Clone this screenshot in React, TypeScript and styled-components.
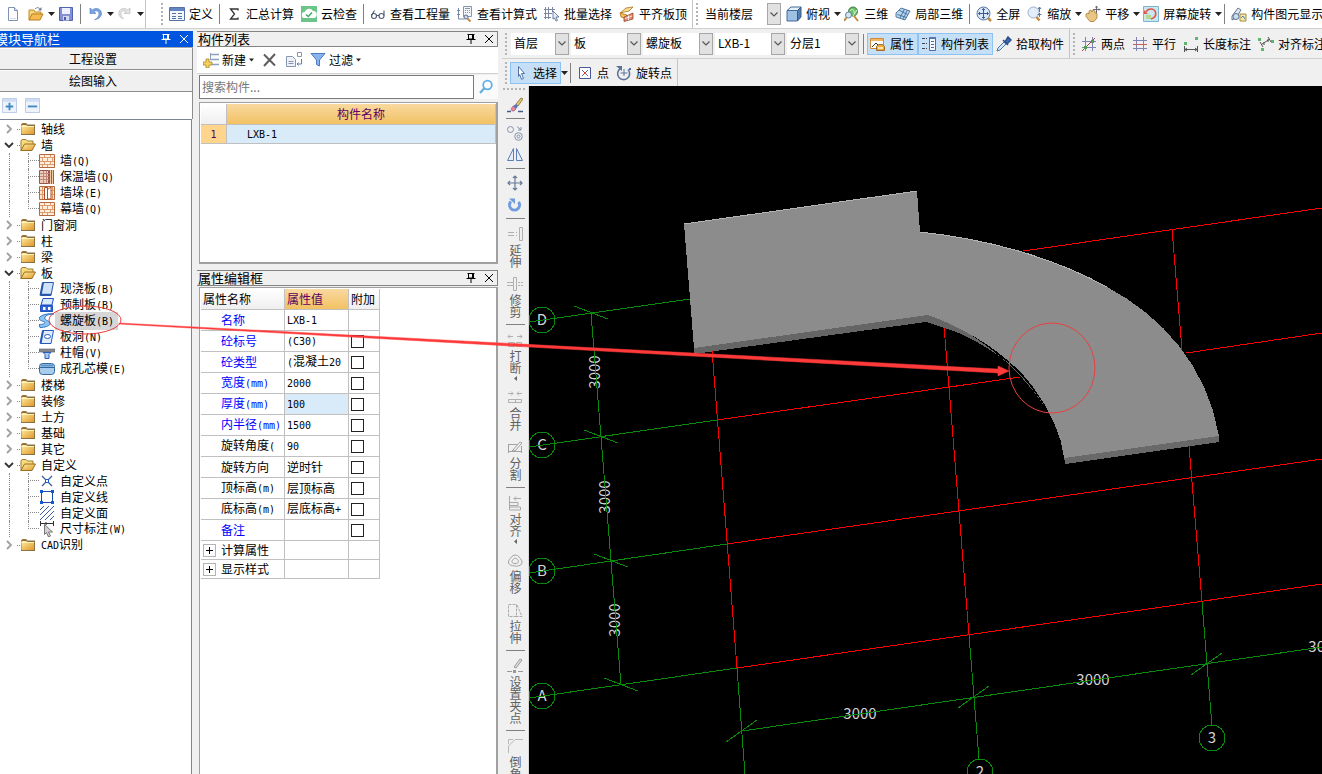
import React from 'react';
import styled, { createGlobalStyle, css } from 'styled-components';

const GlobalStyle = createGlobalStyle`
  *, *::before, *::after { box-sizing: border-box; }
  html, body { margin: 0; }
  body {
    background: #f0f0f0;
    color: #000;
    font-family: "Noto Sans CJK SC", sans-serif;
    font-size: 12px;
    line-height: 16px;
    overflow: hidden;
  }
  button, input, select { font: inherit; color: inherit; margin: 0; }
  ul { list-style: none; margin: 0; padding: 0; }
`;

/* ---------- icons ---------- */

const blue = '#5b7fb5';
const icons: Record<string, React.ReactNode> = {
  newFile: (
    <>
      <path d="M3.500 1.500h6l3 3v10h-9z" fill="#fdfdff" stroke="#8292ae" />
      <path d="M9.500 1.500v3h3" fill="#dbe4f2" stroke="#8292ae" />
      <path d="M5 12.500h6" stroke="#d5dfee" />
    </>
  ),
  open: (
    <>
      <path d="M1 14V4h5l1 2h6v3" fill="#f6d678" stroke="#c08a2c" />
      <path d="M1 14l3-6h11l-3 6z" fill="#f4bc4e" stroke="#b97c22" />
      <path d="M7 3c2-2 4-1.500 5 0" fill="none" stroke="#6c7d98" />
      <path d="M13.500 1v3.500H10z" fill="#6c7d98" />
    </>
  ),
  save: (
    <>
      <path d="M1.500 1.500h13v13h-13z" fill="#8391d4" stroke="#5261ad" />
      <path d="M4 2h8v6H4z" fill="#eef1fb" />
      <path d="M5 10h6v4.500H5z" fill="#d3d8ee" />
      <path d="M6 11h2v3H6z" fill="#4a59a8" />
    </>
  ),
  undo: <path d="M3 2v5.500h6L7 5.600c2-1.600 5-.6 5 2.400 0 2.600-2 4.400-4.500 5.800 4-.6 7-3 7-6.300C14.500 3 9 1 5.300 4z" fill="#7ba4e2" stroke="#4f7cc2" strokeWidth=".6" />,
  redo: <path d="M13 2v5.500H7l2-1.900C7 4 4 5 4 8c0 2 1 3.500 2.500 4.800C3.500 12 1.800 10 1.800 7.500 1.800 3 7 1 10.700 4z" fill="#e4e4e4" stroke="#bcbcbc" strokeWidth=".7" />,
  define: (
    <>
      <path d="M.500 1.500h15v13H.500z" fill="#f3f6fb" stroke="#5572a8" />
      <path d="M1 2h14v3H1z" fill="#6385c4" />
      <path d="M3 7.500h4M3 10.500h4M3 12.500h4M9 7.500h4M9 10.500h4M9 12.500h4" stroke="#5572a8" />
    </>
  ),
  sigma: <path d="M12 4.500V3H4.500l4 5-4 5H12v-1.500" fill="none" stroke="#333" strokeWidth="1.300" />,
  cloud: (
    <>
      <path d="M0 0h16v16H0z" fill="#6cc588" />
      <path d="M4 12a3 3 0 0 1-.3-6A4.500 4.500 0 0 1 12 5a3.500 3.500 0 0 1 .5 7z" fill="#fff" />
      <path d="M5 8.500l2.300 2L11 6.500" fill="none" stroke="#3fa863" strokeWidth="1.500" />
    </>
  ),
  glasses: (
    <g fill="none" stroke="#4a5b72" strokeWidth="1.100">
      <circle cx="4" cy="10" r="2.500" />
      <circle cx="11.500" cy="10" r="2.500" />
      <path d="M6.500 9.500h2.500M1.500 9.500l3-5M14 9.500V4.500" />
    </g>
  ),
  formula: (
    <>
      <path d="M6.500.500h8v10h-8z" fill="#f2f4fa" stroke="#8a94ae" />
      <path d="M8 2.500h5M8 4.500h1M10 4.500h1M12 4.500h1M8 6.500h1M10 6.500h1M12 6.500h1" stroke="#8a94ae" />
      <path d="M1.500 2v11h6M0 4.500h3M0 8.500h3" stroke="#7a86a6" fill="none" />
      <circle cx="9" cy="11" r="2" fill="#cfe0f2" stroke="#5c6b8c" />
      <path d="M10.500 12.500l3 3" stroke="#c48a44" strokeWidth="2" />
    </>
  ),
  batch: (
    <>
      <path d="M1.500 1v12M4.500 1v12M0 3.500h11M0 7.500h8M0 11.500h7M8.500 1v5" stroke="#7c86a0" fill="none" />
      <path d="M9 5l6 6h-3l1.500 3.500-1.500.500L10.500 12 9 13z" fill="#e8eefa" stroke="#4f6696" strokeWidth=".8" />
    </>
  ),
  align: (
    <>
      <path d="M1 7l6-5 7-1-4 4z" fill="#f7dc92" stroke="#a87424" strokeWidth=".8" />
      <path d="M1 7l7 2v4l-6-2z" fill="#f4c050" stroke="#a87424" strokeWidth=".8" />
      <path d="M5 11l9-4v6l-9 2.500z" fill="#e58a6c" stroke="#8d4a34" strokeWidth=".8" />
      <path d="M6 12.500l7-2.500M9.500 9.500v4.500" stroke="#fff" strokeWidth=".8" />
    </>
  ),
  cube: (
    <>
      <path d="M1 4.500L5 1h10l-3.500 3.500z" fill="#e3effa" stroke="#456b99" />
      <path d="M1 4.500h10.500V15H1z" fill="#9cc1e3" stroke="#456b99" />
      <path d="M11.500 4.500L15 1v10l-3.500 4z" fill="#4f7eae" stroke="#385b85" />
    </>
  ),
  threeD: (
    <>
      <circle cx="9" cy="5.500" r="4.500" fill="#6cbf66" stroke="#387d44" />
      <path d="M6 5c2-3 5-1 4 2M9 10l4-6" stroke="#d8f0d2" fill="none" />
      <circle cx="4.500" cy="9" r="3" fill="#d5e5f4" stroke="#6382a8" />
      <path d="M2.500 11.500L0 15M10 10l4 5" stroke="#c18a3c" strokeWidth="2" />
    </>
  ),
  part3d: (
    <g fill="#b8d3ea" stroke="#42709d" strokeWidth=".9">
      <path d="M1 7l5-5 9 3-5 9-9-3z" />
      <path d="M4 4l8.500 4.500M9.500 3L5 12M12.500 4L8 13M2.500 8.500l9 3" fill="none" />
    </g>
  ),
  full: (
    <>
      <circle cx="7.500" cy="7.500" r="6.500" fill="#d9e8f8" stroke="#5b77a4" />
      <path d="M7.500 2.500v10M2.500 7.500h10M6 4l1.500-1.500L9 4M6 11l1.500 1.500L9 11M4 6L2.500 7.500 4 9M11 6l1.500 1.500L11 9" stroke="#3d5a94" fill="none" />
      <path d="M12 12l3 3" stroke="#c18a3c" strokeWidth="2.500" />
    </>
  ),
  zoom: (
    <>
      <circle cx="6.500" cy="6.500" r="5.500" fill="#e4eefa" stroke="#9eb1cf" />
      <path d="M12.500 1v5M11 3l1.500-2L14 3M10.500 8.500h4M12.500 7v4" stroke="#5e7499" fill="none" />
      <path d="M9.500 11l3 3.500" stroke="#c18a3c" strokeWidth="2.500" />
    </>
  ),
  pan: (
    <>
      <path d="M1 8l2-1 1 1V5l2-1 1 2 1-2 2 1v2l2 .5V12l-3 3.500H5l-4-5z" fill="#eac684" stroke="#a87b36" strokeWidth=".8" />
      <path d="M11.500 0v7M8 3.500h7M10.500 1.500l1-1.500 1 1.500M14 2.500l1 1-1 1" stroke="#667" fill="none" />
    </>
  ),
  screenRotate: (
    <>
      <path d="M.500.500h15v15H.500z" fill="#c9e7f2" stroke="#7ab7cf" />
      <path d="M3 13V9h5v4z" fill="#b5d98a" />
      <path d="M3 6c2-4 8-4 9.500 0 1 4-1 6-4.500 7" fill="none" stroke="#e0584c" strokeWidth="1.600" />
      <path d="M5 8H1V4z" fill="#e0584c" />
    </>
  ),
  display: (
    <>
      <path d="M1 10l6-8 3 2-5 8-4 2z" fill="#dfe8f2" stroke="#65768f" />
      <circle cx="5" cy="10.500" r="3" fill="#c9dff3" stroke="#65768f" />
      <path d="M9 8h6v7H9z" fill="#f6e7b4" stroke="#a58a3c" />
      <path d="M10 12l2-2 2 3" stroke="#48a" fill="none" />
    </>
  ),
  props: (
    <>
      <path d="M.500 2.500h13v10H.500z" fill="#fff" stroke="#d08b3c" />
      <path d="M1 3h12v2H1z" fill="#f3b564" />
      <path d="M2 11l4-4 3 3" stroke="#333" fill="none" />
      <path d="M6.500 10.500l2-2h4l2 2v4h-8z" fill="#f2a93c" stroke="#8e5716" strokeWidth=".8" />
      <path d="M8 11h5v2H8z" fill="#ffe4a8" />
    </>
  ),
  list: (
    <>
      <path d="M1 2.500h3M1 7.500h3M1 12.500h3M5 2.500h1M5 7.500h1M5 12.500h1" stroke="#445" />
      <path d="M8.500 1.500h6v13h-6z" fill="#f4f7fd" stroke="#4c69a8" />
      <path d="M8 1h7v2H8z" fill="#5575b8" />
      <path d="M10 5.500h3M10 8.500h3M10 11.500h3" stroke="#4c69a8" />
    </>
  ),
  pick: (
    <>
      <path d="M1 15l1-3 6-6 2 2-6 6z" fill="#d6e6f8" stroke="#4b74ad" />
      <path d="M7 4l5 5M9 6l3-5 3 3-4 4z" fill="#3d6cb5" stroke="#2b4f8c" strokeWidth="1.500" />
    </>
  ),
  twoPoint: (
    <>
      <path d="M4.500 1v14M11.500 1v14M1 5.500h14M1 11.500h14" stroke="#7f84b4" />
      <path d="M1 15L14 2" stroke="#b03c3c" />
      <path d="M3 10h3v3H3zM10 4h3v3h-3z" fill="#4f9c4f" />
    </>
  ),
  parallel: (
    <>
      <path d="M4.500 1v14M11.500 1v14M1 4.500h14M1 12.500h14" stroke="#7f84b4" />
      <path d="M1 8.500h14" stroke="#c86060" />
    </>
  ),
  lengthDim: (
    <>
      <path d="M1 6h3v3H1zM12 1h3v3h-3z" fill="#5eb66a" />
      <path d="M1.500 10v6M14.500 10v6M2 13.500h12M4 12l-2 1.500L4 15M12 12l2 1.500L12 15" stroke="#555" fill="none" />
    </>
  ),
  alignDim: (
    <>
      <path d="M0 2h3v3H0zM3 12h3v3H3zM13 4h3v3h-3z" fill="#5eb66a" />
      <path d="M2 6l3 5M4 8l8-5M10 1l3 5M6 6v3M10 3v3" stroke="#555" fill="none" />
    </>
  ),
  cursor: <path d="M5.500 1.500l6 7H8.500l2 5-2 .8-1.800-4.800-1.200 2z" fill="#fff" stroke="#5472a8" />,
  point: (
    <>
      <path d="M2.500 2.500h11v11h-11z" fill="#fff" stroke="#4a5a9a" />
      <path d="M5 5l6 6M11 5l-6 6" stroke="#5a68a8" />
      <path d="M7 7h2v2H7z" fill="#e03a3a" />
    </>
  ),
  rotatePoint: (
    <>
      <path d="M4.500 3.500A6 6 0 1 0 12 4.500" fill="none" stroke="#5a7399" strokeWidth="1.600" />
      <path d="M0 1h6v5z" fill="#5a7399" />
      <path d="M8 4v7M4.500 8h7" stroke="#5a7399" />
      <path d="M13 3h2v2h-2z" fill="#5a7399" />
    </>
  ),
  addRows: (
    <>
      <path d="M7 2.500h9M7 7.500h9M9 12.500h7" stroke="#8da0bc" strokeWidth="1.500" />
      <path d="M7.500 1v7" stroke="#8da0bc" />
      <path d="M3 7h3v3h3v3H6v3H3v-3H0v-3h3z" fill="#f4d35c" stroke="#a8852a" strokeWidth=".8" />
    </>
  ),
  cross: <path d="M2 2.500l11 11M13 2l-11 12" stroke="#5e5e5e" strokeWidth="2" />,
  copy: (
    <>
      <path d="M.500 4.500h6l3 3v7h-9z" fill="#eef2f8" stroke="#8796b0" />
      <path d="M2.500 9.500h5M2.500 11.500h5" stroke="#8796b0" />
      <path d="M11.500.500h4v4h-4z" fill="#fff" stroke="#8796b0" />
      <path d="M15.500 7v5H11M12.500 10.500L11 12l1.500 1.500" stroke="#5a7db5" fill="none" />
    </>
  ),
  funnel: <path d="M1 1.500h14L9.500 8v6l-3-1.500V8z" fill="#8ab4ea" stroke="#4a7cc4" />,
  search: (
    <>
      <circle cx="9.500" cy="6" r="4.300" fill="#fff" stroke="#5fb0e6" strokeWidth="1.800" />
      <path d="M6.500 9L2 14" stroke="#5fb0e6" strokeWidth="2.200" />
    </>
  ),
  plusBox: (
    <>
      <path d="M.500.500h15v15H.500z" fill="#eef3fb" stroke="#b7c9e6" />
      <path d="M1 1h14v3H1z" fill="#cfdcf2" />
      <path d="M8 5v8M4 9h8" stroke="#3f8cc4" strokeWidth="2" />
    </>
  ),
  minusBox: (
    <>
      <path d="M.500.500h15v15H.500z" fill="#eef3fb" stroke="#b7c9e6" />
      <path d="M1 1h14v3H1z" fill="#cfdcf2" />
      <path d="M3 9h10" stroke="#3f8cc4" strokeWidth="2" />
    </>
  ),
  folder: (
    <>
      <path d="M1 3.500L2.500 2H6l1.500 1.500H15V14H1z" fill="#8a7340" />
      <path d="M1.500 4h5l1 1H14v8H1.500z" fill="url(#folderFill)" />
      <path d="M1.500 5.500H14" stroke="#fff3bd" />
    </>
  ),
  folderOpen: (
    <>
      <path d="M1 14V4l1-1.500h4L7.500 4H13v3" fill="#f8dc7c" stroke="#9a7c34" />
      <path d="M1 13.500L4.500 7H15.500L12 13.500z" fill="url(#folderFill)" stroke="#9a6f1c" />
    </>
  ),
  brick: (
    <>
      <path d="M.500 1.500h15v13H.500z" fill="#fdeedd" stroke="#b5683c" />
      <path d="M1 4.500h14M1 8.500h14M1 11.500h14M5.500 2v3M11.500 2v3M3.500 5v3M8.500 5v3M13.500 5v3M5.500 9v3M11.500 9v3M3.500 12v2M8.500 12v2" stroke="#dc9a6e" />
    </>
  ),
  insulated: (
    <>
      <path d="M.500 1.500h9v13h-9z" fill="#eccdbd" stroke="#96544c" />
      <path d="M1 4.500h9M1 7.500h9M1 10.500h9M4.500 2v12M7.500 2v12" stroke="#c08878" />
      <path d="M10 1h5v14h-5z" fill="#c84f2c" />
      <path d="M11.500 1v14M13.500 1v14" stroke="#f3c9a4" />
    </>
  ),
  pier: (
    <>
      <path d="M.500 1.500h15v13H.500z" fill="#fbe6d2" stroke="#b5683c" />
      <path d="M1 5.500h14M1 9.500h14M3.500 2v12M13.500 2v12" stroke="#dc9a6e" />
      <path d="M5.500 2.500h3v12h-3zM8.500 4.500L12 2v12H8.500z" fill="#fff" stroke="#b04c20" />
    </>
  ),
  slab: (
    <>
      <path d="M4 1.500h10.500L12 14.500H1.500z" fill="#cfe2fa" stroke="#2856a8" />
      <path d="M1.500 14.500L4 1.500" stroke="#2856a8" strokeWidth="2" />
      <path d="M2 13.500h10" stroke="#2856a8" strokeWidth="1.500" />
    </>
  ),
  precast: (
    <>
      <path d="M4 1.500h10.500L13 8H2z" fill="#dceafd" stroke="#1f4fc0" />
      <path d="M1.500 8.500h12v6h-12z" fill="#2f62d8" stroke="#1f4fc0" />
      <path d="M4 10h2.500v3H4zM9 10h2.500v3H9z" fill="#fff" />
    </>
  ),
  spiral: (
    <path d="M15 1C9 1 5 3 6 6c1 2 6 2 5 5-1 2-5 3.500-10 3.500l-1-3c4 0 6-1 6-2C5 8 0 8 0 5c2-3 9-5 15-4z" fill="#8cc4f4" stroke="#2f74c0" />
  ),
  slabHole: (
    <>
      <path d="M4 1.500h10.500L12 14.500H1.500z" fill="#e2edfc" stroke="#2856c0" />
      <path d="M1.500 14.500L4 1.500" stroke="#2856c0" strokeWidth="2" />
      <ellipse cx="8.500" cy="7.500" rx="3" ry="2" fill="#fff" stroke="#2856c0" />
    </>
  ),
  cap: (
    <>
      <path d="M0 4h16v3H0z" fill="#86898f" stroke="#5d6066" strokeWidth=".6" />
      <path d="M4 7.500h8L10 9.500v4H6v-4z" fill="#a9c9f2" stroke="#2b5dc0" />
    </>
  ),
  core: (
    <>
      <rect x=".500" y="2.500" width="15" height="11" rx="3" fill="#a8cdec" stroke="#34679c" />
      <path d="M1 6.500h14" stroke="#34679c" />
      <path d="M2 4.500h12" stroke="#5c94c8" strokeWidth="2" />
    </>
  ),
  customPoint: (
    <>
      <path d="M3 3l10 10M13 3L3 13" stroke="#3f5f98" strokeWidth="1.300" />
      <path d="M6.500 6.500h3v3h-3z" fill="#fff" stroke="#1558d8" />
    </>
  ),
  customLine: (
    <>
      <path d="M2.500 2.500h11v11h-11z" fill="#fff" stroke="#1c4ea8" />
      <path d="M1 1h3v3H1zM12 1h3v3h-3zM1 12h3v3H1zM12 12h3v3h-3z" fill="#1558d8" />
    </>
  ),
  customFace: <path d="M1 5l4-4M1 10l9-9M1 15L15 1M6 15l9-9M11 15l4-4" stroke="#3c58a8" />,
  dimension: (
    <>
      <path d="M1.500 0v5M14.500 0v5M2 2.500h12M7 1v3" stroke="#333" />
      <path d="M5.500 3.500l8 7.500h-4l2 4-2 1-2-4.500-2 2z" fill="#d2d2d2" stroke="#777" />
    </>
  ),
  eraser: (
    <>
      <path d="M0 14.500h4M11 14.500h5" stroke="#44588a" strokeWidth="1.500" />
      <path d="M9 7l5-6 2 1-5 7z" fill="#e6c66a" stroke="#7b6b3a" strokeWidth=".8" />
      <path d="M6 9l3-2 2 2-2 3z" fill="#5a78b8" />
      <path d="M4 12l2-3 3 3-2 2H5z" fill="#e58aa4" stroke="#a05068" strokeWidth=".6" />
    </>
  ),
  copyShape: (
    <g fill="none" stroke="#8293ae">
      <circle cx="3.500" cy="4.500" r="3" />
      <circle cx="11.500" cy="11.500" r="3.800" />
      <circle cx="11.500" cy="11.500" r="1.500" />
      <path d="M10 1.500l4 3.500M14 2v3h-3" />
    </g>
  ),
  mirror: <path d="M6.500 1.500v12h-6zM9.500 1.500v12h6z" fill="#e6eefa" stroke={blue} />,
  move: <path d="M8 1v14M1 8h14M6 3l2-2 2 2M6 13l2 2 2-2M3 6L1 8l2 2M13 6l2 2-2 2" fill="none" stroke="#667a99" strokeWidth="1.200" />,
  rotate: (
    <>
      <path d="M4 4.500a5 5 0 1 0 7.500.500" fill="none" stroke="#6f9ce0" strokeWidth="3" />
      <path d="M2 1.500h6v5.500z" fill="#6f9ce0" />
    </>
  ),
  extend: <path d="M1 6.500h6M1 9.500h6M9 6.500h1M9 9.500h1M12.500 1.500h3v13h-3z" fill="none" stroke="#b0b0b0" />,
  trim: <path d="M0 6.500h6M0 9.500h6M6.500 1.500h3v13h-3zM11 6.500h2M14 6.500h2M11 9.500h2M14 9.500h2" fill="none" stroke="#b0b0b0" />,
  breakUp: <path d="M1 4.500h5M3 2.500l-2 2 2 2M10 4.500h5M13 2.500l2 2-2 2M1.500 10.500h6v4h-6zM9.500 10.500h5v4h-5z" fill="none" stroke="#b0b0b0" />,
  merge: <path d="M1 4.500h5M4 2.500l2 2-2 2M10 4.500h5M12 2.500l-2 2 2 2M1.500 10.500h13v3h-13zM8.500 10v4" fill="none" stroke="#b0b0b0" />,
  split: <path d="M1.500 5.500h9M1 12.500h14M1.500 5v9M14.500 7v7M5 12l8-9 2 1-7 8zM5 12l3 0" fill="none" stroke="#a2a2a2" />,
  alignTo: <path d="M2.500 1v14h11v-3h-11M3 7.500h8v3H3M7 3.500h7M9 1.500l-2 2 2 2" fill="none" stroke="#a8a8a8" />,
  offset: (
    <g fill="none" stroke="#a2a2a2">
      <path d="M1.500 10c0-3 2-3 3-5s6-3 7.500 0c1 2 3 2 3 5s-3 4.500-7 4-6.500-1-6.500-4z" />
      <path d="M5 9.500c0-1.500 1-1.500 1.500-2.500s3-1 3.500 0 1.500 1 1.500 2.500-1.500 2-3.500 2-3-.5-3-2z" />
    </g>
  ),
  stretch: <path d="M1.500 2.500h8v12h-8zM10 3l5 11.500H9" fill="none" stroke="#acacac" strokeDasharray="3 1" />,
  grip: (
    <>
      <path d="M0 13.500h5M11 13.500h5" stroke="#999" />
      <path d="M6 12h3v3H6z" fill="#999" />
      <path d="M7 9l6-8 2 1-6 8z" fill="#ddd" stroke="#999" />
    </>
  ),
  chamfer: <path d="M1.500 15V8L8 1.500h8M1.500 6V1.500H6" fill="none" stroke="#b8b8b8" />,
  pin: <path d="M3.500 1v5h5V1M1.500 6.500h9M6 7v4M2.500 1.500h7M7.500 2v4" fill="none" stroke="currentColor" />,
  close: <path d="M2 2l8 8M10 2l-8 8" stroke="currentColor" fill="none" />,
};

const Svg = styled.svg`
  display: block;
  flex: none;
`;

const Icon = ({ name, size = 16 }: { name: string; size?: number }) => (
  <Svg
    width={size}
    height={size}
    viewBox={name === 'pin' || name === 'close' ? '0 0 12 12' : '0 0 16 16'}
    fill="none"
    aria-hidden="true"
  >
    {icons[name]}
  </Svg>
);

const Caret = ({ width = 7 }: { width?: number }) => (
  <Svg width={width} height="4" viewBox="0 0 7 4" aria-hidden="true">
    <path d="M0 0h7L3.500 4z" fill="#222" />
  </Svg>
);

/* ---------- mixed Chinese / fixed-pitch text ---------- */

const Fixed = styled.span`
  font-family: "DejaVu Sans Mono", monospace;
  font-size: 10px;
`;

const Song = ({ text }: { text: string }) => (
  <>
    {text.split(/([\x20-\x7e]+)/).map((part, i) => (i % 2 ? <Fixed key={i}>{part}</Fixed> : part))}
  </>
);

/* ---------- toolbars ---------- */

const Toolbar = styled.div<{ $height: number; $white?: boolean }>`
  display: flex;
  align-items: stretch;
  height: ${(p) => p.$height}px;
  flex: none;
  overflow: hidden;
  background: ${(p) => (p.$white ? '#fff' : '#f0f0f0')};
  border-bottom: ${(p) => (p.$height > 28 ? '1px solid #cfcfcf' : '0')};
`;

const Segment = styled.div<{ $lead?: number; $gapAfter?: number }>`
  display: flex;
  align-items: center;
  flex: none;
  padding: 0 1px 0 ${(p) => p.$lead ?? 0}px;
  border-right: 1px solid #c4c4c4;
  margin-right: ${(p) => p.$gapAfter ?? 0}px;
`;

const Handle = styled.span`
  width: 2px;
  height: 22px;
  margin: 0 3px;
  background: repeating-linear-gradient(#b4b4b4 0 2px, transparent 2px 4px);
`;

const Divider = styled.span`
  width: 1px;
  height: 20px;
  margin: 0 3px 0 2px;
  background: #808080;
`;

const ToolButton = styled.button<{ $on?: boolean }>`
  display: flex;
  align-items: center;
  gap: 4px;
  flex: none;
  height: 22px;
  padding: 0 4px 0 3px;
  border: 0;
  background: transparent;
  white-space: nowrap;
  line-height: 16px;
  &:has(> svg:last-child:not(:only-child)) { padding-right: 0; }
  ${(p) =>
    p.$on &&
    css`
      background: #c4dff6;
      box-shadow: inset 0 0 0 1px #8dc3f2;
    `}
`;

const CaretButton = styled.button`
  display: flex;
  align-items: center;
  width: 7px;
  height: 22px;
  padding: 0;
  border: 0;
  background: transparent;
`;

type ToolProps = { icon: string; label?: string; title?: string; menu?: boolean; on?: boolean };
const Tool = ({ icon, label, title, menu, on }: ToolProps) => (
  <ToolButton type="button" $on={on} aria-label={title} aria-pressed={on}>
    <Icon name={icon} />
    {label}
    {menu && <Caret />}
  </ToolButton>
);

const ComboStrip = styled.div`
  display: flex;
  gap: 2px;
  padding: 0 2px 0 1px;
`;

const ComboBox = styled.div<{ $width: number }>`
  display: grid;
  grid-template-columns: 1fr 14px;
  width: ${(p) => p.$width}px;
  height: 22px;
  background: #fff;
`;

const ComboSelect = styled.select`
  grid-area: 1 / 1 / 2 / 3;
  appearance: none;
  border: 0;
  padding: 0 0 1px 3px;
  background: transparent;
  line-height: 18px;
`;

const ComboArrow = styled.span`
  grid-area: 1 / 2;
  display: grid;
  place-items: center;
  background: #e1e1e1;
  border: 1px solid #a6a6a6;
  pointer-events: none;
`;

const Combo = ({ value, width, label }: { value: string; width: number; label: string }) => (
  <ComboBox $width={width}>
    <ComboSelect aria-label={label} defaultValue={value}>
      <option>{value}</option>
    </ComboSelect>
    <ComboArrow>
      <Svg width="8" height="5" viewBox="0 0 8 5">
        <path d="M.500.500L4 4 7.500.500" fill="none" stroke="#555" strokeWidth="1.200" />
      </Svg>
    </ComboArrow>
  </ComboBox>
);

/* ---------- frame ---------- */

const Shell = styled.div`
  position: relative;
  display: flex;
  flex-direction: column;
  height: 100vh;
  overflow: hidden;
`;

const Body = styled.div`
  display: flex;
  flex: 1;
  min-height: 0;
`;

const TitleBar = styled.header<{ $active?: boolean }>`
  display: flex;
  align-items: center;
  gap: 6px;
  flex: none;
  height: 16px;
  padding-right: 3px;
  background: ${(p) => (p.$active ? '#0055e0' : '#f0f0f0')};
  color: ${(p) => (p.$active ? '#fff' : '#000')};
  ${(p) =>
    !p.$active &&
    css`
      padding-right: 2px;
      border: 1px solid #848484;
      border-left: 0;
    `}
`;

const PanelTitle = styled.h2<{ $shift?: number }>`
  flex: 1;
  margin: 0 0 0 ${(p) => p.$shift ?? 1}px;
  font-size: 13px;
  font-weight: 400;
  line-height: 20px;
  white-space: nowrap;
`;

const TitleButton = styled.button`
  padding: 0;
  border: 0;
  background: transparent;
`;

const TitleTools = () => (
  <>
    <TitleButton type="button" aria-label="自动隐藏"><Icon name="pin" size={12} /></TitleButton>
    <TitleButton type="button" aria-label="关闭"><Icon name="close" size={12} /></TitleButton>
  </>
);

/* ---------- navigation ---------- */

const Nav = styled.aside`
  display: flex;
  flex-direction: column;
  width: 193px;
  flex: none;
  padding-top: 2px;
`;

const NavTab = styled.button`
  height: 22px;
  flex: none;
  padding: 0 6px 0 0;
  border: 1px solid #8d8d8d;
  border-width: 0 1px 1px 0;
  box-shadow: inset 0 1px #fff;
  background: #f0f0f0;
  line-height: 20px;
`;

const NavTabs = styled.div`
  display: flex;
  flex-direction: column;
  border-top: 1px solid #a9a9a9;
`;

const ExpandBar = styled.div`
  display: flex;
  align-items: center;
  gap: 8px;
  height: 27px;
  flex: none;
  padding-left: 2px;
  background: #fff;
  border-right: 1px solid #8d8d8d;
`;

const ExpandButton = styled.button`
  padding: 0;
  border: 0;
  background: transparent;
`;

const Tree = styled.ul`
  flex: 1;
  margin-right: 1px;
  padding-top: 1px;
  background: #fff;
  border-top: 1px solid #7d8390;
  border-right: 1px solid #7d8390;
  overflow: hidden;
`;

const TreeRow = styled.div`
  display: flex;
  align-items: center;
  height: 16px;
  white-space: nowrap;
`;

const Twist = styled.button<{ $open?: boolean }>`
  display: grid;
  place-items: center;
  width: 11px;
  height: 16px;
  margin-left: 3px;
  padding: 0;
  border: 0;
  background: transparent;
  color: ${(p) => (p.$open ? '#333' : '#a0a0a0')};
`;

const Dots = styled.span`
  width: 3px;
  margin: 0 0 0 3px;
  border-top: 1px dotted #888;
`;

const TreeText = styled.span<{ $selected?: boolean }>`
  padding: 0 4px 0 5px;
  background: ${(p) => (p.$selected ? '#d6d6d6' : 'transparent')};
`;

const Guide = styled.span`
  width: 19px;
  height: 16px;
  margin-left: 9px;
  border-left: 1px dotted #888;
`;

const Elbow = styled.span<{ $last?: boolean }>`
  display: flex;
  flex-direction: column;
  width: 11px;
  height: 16px;
  &::before {
    content: "";
    height: 8px;
    border-left: 1px dotted #888;
    border-bottom: 1px dotted #888;
  }
  &::after {
    content: "";
    height: 8px;
    border-left: ${(p) => (p.$last ? '0' : '1px dotted #888')};
  }
`;

type Node = { label: string; children?: [string, string][] };
const nodes: Node[] = [
  { label: '轴线' },
  { label: '墙', children: [['brick', '墙(Q)'], ['insulated', '保温墙(Q)'], ['pier', '墙垛(E)'], ['brick', '幕墙(Q)']] },
  { label: '门窗洞' },
  { label: '柱' },
  { label: '梁' },
  {
    label: '板',
    children: [
      ['slab', '现浇板(B)'], ['precast', '预制板(B)'], ['spiral', '螺旋板(B)'],
      ['slabHole', '板洞(N)'], ['cap', '柱帽(V)'], ['core', '成孔芯模(E)'],
    ],
  },
  { label: '楼梯' },
  { label: '装修' },
  { label: '土方' },
  { label: '基础' },
  { label: '其它' },
  {
    label: '自定义',
    children: [['customPoint', '自定义点'], ['customLine', '自定义线'], ['customFace', '自定义面'], ['dimension', '尺寸标注(W)']],
  },
  { label: 'CAD识别' },
];

const NavTree = () => (
  <Tree>
    {nodes.map(({ label, children }) => (
      <li key={label}>
        <TreeRow>
          <Twist type="button" $open={!!children} aria-label={label} aria-expanded={!!children}>
            <Svg width="10" height="10" viewBox="0 0 10 10">
              <path d={children ? 'M1 3l4 4 4-4' : 'M3 1l4 4-4 4'} fill="none" stroke="currentColor" strokeWidth="1.800" />
            </Svg>
          </Twist>
          <Dots />
          <Icon name={children ? 'folderOpen' : 'folder'} />
          <TreeText><Song text={label} /></TreeText>
        </TreeRow>
        {children && (
          <ul>
            {children.map(([icon, text], i) => (
              <li key={text}>
                <TreeRow>
                  <Guide />
                  <Elbow $last={i === children.length - 1} />
                  <Icon name={icon} />
                  <TreeText $selected={icon === 'spiral'}><Song text={text} /></TreeText>
                </TreeRow>
              </li>
            ))}
          </ul>
        )}
      </li>
    ))}
  </Tree>
);

/* ---------- component list and properties ---------- */

const Panels = styled.div`
  display: flex;
  flex-direction: column;
  width: 302px;
  flex: none;
  margin: 0 4px 0 3px;
  padding: 2px 0 0 1px;
`;

const ListTools = styled.div`
  display: flex;
  align-items: center;
  gap: 4px;
  height: 27px;
  flex: none;
  padding-left: 4px;
  background: #fff;
  border-bottom: 1px solid #d0d0d0;
`;

const ListButton = styled.button`
  display: flex;
  align-items: center;
  gap: 3px;
  height: 22px;
  padding: 0 2px;
  border: 0;
  background: transparent;
`;

const SearchRow = styled.form`
  display: flex;
  flex: none;
  padding: 1px 0 3px 2px;
`;

const SearchInput = styled.input`
  flex: 1;
  min-width: 0;
  height: 24px;
  padding: 0 2px 2px;
  border: 1px solid #7a7a7a;
  border-radius: 0;
  background: #fff;
  &::placeholder { color: #777; opacity: 1; }
`;

const SearchButton = styled.button`
  display: grid;
  place-items: center;
  width: 24px;
  height: 24px;
  padding: 0;
  border: 0;
  background: #fafafa;
`;

const Well = styled.div<{ $height?: number }>`
  ${(p) => (p.$height ? `height: ${p.$height}px; flex: none;` : 'flex: 1; min-height: 0;')}
  margin: 0 0 0 2px;
  padding: 1px 0 0 1px;
  overflow: hidden;
  background: #fff;
  border: 1px solid #a0a0a0;
  border-right-width: 2px;
  border-bottom-width: ${(p) => (p.$height ? '2px' : '0')};
`;

const Grid = styled.table<{ $width: string }>`
  width: ${(p) => p.$width};
  table-layout: fixed;
  border-collapse: separate;
  border-spacing: 0;
`;

const cell = css<{ $height?: number }>`
  height: ${(p) => p.$height ?? 21}px;
  padding: 0 2px;
  border-right: 1px solid #c0c0c0;
  border-bottom: 1px solid #c0c0c0;
  overflow: hidden;
  white-space: nowrap;
  text-align: left;
  font-weight: 400;
  line-height: 16px;
`;

const HeadCell = styled.th<{ $height?: number; $hot?: boolean; $center?: boolean }>`
  ${cell}
  text-align: ${(p) => (p.$center ? 'center' : 'left')};
  color: ${(p) => (p.$hot ? '#5c0060' : '#000')};
  background: ${(p) => (p.$hot ? 'linear-gradient(#f9d9a0, #f2c163)' : 'linear-gradient(#fff, #efefef)')};
`;

const IndexCell = styled.th<{ $height?: number }>`
  ${cell}
  text-align: center;
  color: #5c0060;
  background: #ffd48c;
`;

const ItemCell = styled.td<{ $height?: number }>`
  ${cell}
  padding-left: 20px;
  background: #d9eaf9;
`;

const NameCell = styled.th<{ $height?: number; $blue?: boolean; $group?: boolean }>`
  ${cell}
  padding-left: ${(p) => (p.$group ? 2 : 20)}px;
  padding-right: 0;
  color: ${(p) => (p.$blue ? '#0000ff' : '#000')};
`;

const ValueCell = styled.td<{ $height?: number; $current?: boolean }>`
  ${cell}
  background: ${(p) => (p.$current ? '#d9eaf9' : '#fff')};
`;

const Tick = styled.input`
  display: block;
  appearance: none;
  width: 13px;
  height: 13px;
  border: 1px solid #222;
  background: #fff;
`;

const GroupLabel = styled.span`
  display: flex;
  align-items: center;
  gap: 5px;
`;

const PlusButton = styled.button`
  display: grid;
  place-items: center;
  width: 13px;
  height: 13px;
  padding: 0;
  border: 1px solid #b4b4b4;
  background: #fff;
`;

const Gap = styled.div<{ $size: number }>`
  flex: none;
  height: ${(p) => p.$size}px;
`;

const properties: [string, string, boolean][] = [
  ['名称', 'LXB-1', true],
  ['砼标号', '(C30)', true],
  ['砼类型', '(混凝土20', true],
  ['宽度(mm)', '2000', true],
  ['厚度(mm)', '100', true],
  ['内半径(mm)', '1500', true],
  ['旋转角度(', '90', false],
  ['旋转方向', '逆时针', false],
  ['顶标高(m)', '层顶标高', false],
  ['底标高(m)', '层底标高+', false],
  ['备注', '', true],
];

/* ---------- vertical edit toolbar ---------- */

const Workspace = styled.main`
  display: flex;
  flex-direction: column;
  flex: 1;
  min-width: 0;
`;

const Stage = styled.div`
  display: flex;
  flex: 1;
  min-height: 0;
`;

const EditBar = styled.div`
  display: flex;
  flex-direction: column;
  align-items: center;
  width: 27px;
  flex: none;
  overflow: hidden;
  border-right: 1px solid #d8d8d8;
`;

const EditHandle = styled.span`
  flex: none;
  width: 24px;
  height: 2px;
  margin: 2px 0 4px;
  background: repeating-linear-gradient(90deg, #b4b4b4 0 2px, transparent 2px 4px);
`;

const EditDivider = styled.span`
  flex: none;
  width: 19px;
  height: 1px;
  margin: 2px 0 3px;
  background: #808080;
`;

const EditButton = styled.button<{ $labelled?: boolean }>`
  display: flex;
  flex-direction: column;
  align-items: center;
  gap: 2px;
  flex: none;
  padding: ${(p) => (p.$labelled ? '4px 0' : '3px 0')};
  border: 0;
  background: transparent;
  color: #5f5f5f;
`;

const VerticalText = styled.span`
  writing-mode: vertical-rl;
  line-height: 20px;
`;

const SideCaret = () => (
  <Svg width="4" height="5" viewBox="0 0 4 5"><path d="M4 0v5L1 2.500z" fill="#666" /></Svg>
);

const edits: ([string, string?, boolean?] | null)[] = [
  ['eraser'], null, ['copyShape'], ['mirror'], null, ['move'], ['rotate'], null,
  ['extend', '延伸'], ['trim', '修剪'], null,
  ['breakUp', '打断', true], ['merge', '合并'], ['split', '分割'], null,
  ['alignTo', '对齐', true], ['offset', '偏移'], ['stretch', '拉伸'], null,
  ['grip', '设置夹点'], null, ['chamfer', '倒角'],
];

/* ---------- drawing ---------- */

const Viewport = styled.div`
  flex: 1;
  min-width: 0;
  overflow: hidden;
  background: #000;
`;

const bubbles: [number, number, string][] = [
  [542, 320, 'D'], [542, 445, 'C'], [542, 571, 'B'], [542, 696, 'A'], [980, 772, '2'], [1212, 738, '3'],
];

const Drawing = () => (
  <Svg as="svg" width="100%" height="100%" aria-label="三维视图" fontSize="15">
    <g transform="translate(-529 -86)">
      <g fill="#d4d4d4" textAnchor="middle">
        {[[600, 372], [610, 497], [620, 620]].map(([x, y]) => (
          <text key={y} transform={`translate(${x} ${y}) rotate(-90)`}>3000</text>
        ))}
        <text x="860" y="719">3000</text>
        <text x="1093" y="685">3000</text>
        <text x="1325" y="652">3000</text>
        {bubbles.map(([x, y, t]) => <text key={t} x={x} y={y + 5}>{t}</text>)}
      </g>
      <g stroke="#f00" fill="none" shapeRendering="crispEdges">
        <path d="M1023 251L1322 208M717 420L1020 377M1186 353L1322 333M727 544L1322 459M737 668L1322 584" />
        <path d="M712 350L737 668M944 326L969 635M1172 229L1182 350M1189 446L1202 602" />
      </g>
      <g stroke="#0a8a0a" fill="none" shapeRendering="crispEdges">
        <path d="M529 322L690 299M529 447L717 420M529 573L727 544M529 698L737 668" />
        <path d="M591 313L621 685M742 731L1322 647" />
        <path d="M737 668L745 774M969 635L979 759M1202 602L1212 726" />
        {[[591, 313], [601, 437], [611, 561], [621, 685]].map(([x, y]) => (
          <path key={y} d={`M${x - 17} ${y - 7}l34 13`} />
        ))}
        {[[742, 731], [974, 697], [1207, 664]].map(([x, y]) => (
          <path key={y} d={`M${x - 16} ${y + 11}l31 -22`} />
        ))}
        {bubbles.map(([x, y, t]) => (
          <polygon
            key={t}
            points={Array.from({ length: 16 }, (_, i) => {
              const a = (i * Math.PI) / 8;
              return `${x + 13 * Math.cos(a)},${y + 13 * Math.sin(a)}`;
            }).join(' ')}
          />
        ))}
      </g>
      <g shapeRendering="crispEdges">
        <path d="M694 346L928 313C960 325 1014 357 1048 412C1030 382 1012 366 1006 361C985 345 962 333 945 328L926 322 694 354z" fill="#656565" />
        <path d="M1064 456L1219 434V442L1065 464z" fill="#696969" />
        <path
          d="M684 224L917 191 920 232C985 239 1050 256 1107 287C1162 316 1207 366 1219 436L1064 458C1062 436 1050 410 1033 387C1010 355 965 328 928 315L694 348z"
          fill="#8c8c8c"
        />
        <path d="M684 224L917 191M920 232C985 239 1050 256 1107 287" fill="none" stroke="#b4b4b4" />
      </g>
    </g>
  </Svg>
);

/* Red mark-up drawn across every panel of the window. */
const Markup = styled.svg`
  position: absolute;
  inset: 0;
  width: 100%;
  height: 100%;
  pointer-events: none;
`;

export default function App() {
  return (
    <Shell>
      <GlobalStyle />
      <Svg width="0" height="0" aria-hidden="true">
        <linearGradient id="folderFill" x1="0" y1="0" x2="1" y2="1">
          <stop offset="0" stopColor="#ffeea0" />
          <stop offset="1" stopColor="#e0982c" />
        </linearGradient>
      </Svg>

      <Toolbar $height={29} $white>
        <Segment $lead={2} $gapAfter={12}>
          <Tool icon="newFile" title="新建工程" />
          <Tool icon="open" title="打开" menu />
          <Tool icon="save" title="保存" />
          <Divider />
          <Tool icon="undo" title="撤销" menu />
          <Tool icon="redo" title="恢复" menu />
        </Segment>
        <Segment>
          <Handle />
          <Tool icon="define" label="定义" />
          <Divider />
          <Tool icon="sigma" label="汇总计算" />
          <Tool icon="cloud" label="云检查" />
          <Divider />
          <Tool icon="glasses" label="查看工程量" />
          <Tool icon="formula" label="查看计算式" />
          <Tool icon="batch" label="批量选择" />
          <Tool icon="align" label="平齐板顶" />
        </Segment>
        <Segment>
          <Handle />
          <ComboStrip><Combo value="当前楼层" width={79} label="楼层范围" /></ComboStrip>
          <Tool icon="cube" label="俯视" menu />
          <Tool icon="threeD" label="三维" />
          <Tool icon="part3d" label="局部三维" />
          <Divider />
          <Tool icon="full" label="全屏" />
          <Tool icon="zoom" label="缩放" menu />
          <Tool icon="pan" label="平移" menu />
          <Tool icon="screenRotate" label="屏幕旋转" menu />
          <Divider />
          <Tool icon="display" label="构件图元显示设置" />
        </Segment>
      </Toolbar>

      <Body>
        <Nav>
          <TitleBar $active>
            <PanelTitle $shift={-5}>模块导航栏</PanelTitle>
            <TitleTools />
          </TitleBar>
          <NavTabs>
            <NavTab type="button">工程设置</NavTab>
            <NavTab type="button">绘图输入</NavTab>
          </NavTabs>
          <ExpandBar>
            <ExpandButton type="button" aria-label="全部展开"><Icon name="plusBox" size={15} /></ExpandButton>
            <ExpandButton type="button" aria-label="全部折叠"><Icon name="minusBox" size={15} /></ExpandButton>
          </ExpandBar>
          <NavTree />
        </Nav>

        <Panels>
          <TitleBar>
            <PanelTitle>构件列表</PanelTitle>
            <TitleTools />
          </TitleBar>
          <ListTools>
            <ListButton type="button"><Icon name="addRows" />新建<Caret width={5} /></ListButton>
            <ListButton type="button" aria-label="删除"><Icon name="cross" /></ListButton>
            <ListButton type="button" aria-label="复制"><Icon name="copy" /></ListButton>
            <ListButton type="button"><Icon name="funnel" />过滤<Caret width={5} /></ListButton>
          </ListTools>
          <SearchRow>
            <SearchInput type="text" placeholder="搜索构件..." aria-label="搜索构件" />
            <SearchButton type="button" aria-label="搜索"><Icon name="search" /></SearchButton>
          </SearchRow>
          <Well $height={162}>
            <Grid $width="100%">
              <colgroup><col width="26" /><col /></colgroup>
              <thead>
                <tr><HeadCell $height={21} aria-label="序号" /><HeadCell $height={21} $hot $center>构件名称</HeadCell></tr>
              </thead>
              <tbody>
                <tr>
                  <IndexCell $height={19} scope="row"><Song text="1" /></IndexCell>
                  <ItemCell $height={19}><Song text="LXB-1" /></ItemCell>
                </tr>
              </tbody>
            </Grid>
          </Well>
          <Gap $size={6} />
          <TitleBar>
            <PanelTitle>属性编辑框</PanelTitle>
            <TitleTools />
          </TitleBar>
          <Gap $size={1} />
          <Well>
            <Grid $width="179px">
              <colgroup><col width="84" /><col width="64" /><col width="31" /></colgroup>
              <thead>
                <tr><HeadCell>属性名称</HeadCell><HeadCell $hot>属性值</HeadCell><HeadCell>附加</HeadCell></tr>
              </thead>
              <tbody>
                {properties.map(([name, value, isBlue], i) => (
                  <tr key={name}>
                    <NameCell scope="row" $blue={isBlue}><Song text={name} /></NameCell>
                    <ValueCell $current={i === 4}><Song text={value} /></ValueCell>
                    <ValueCell>{i > 0 && <Tick type="checkbox" aria-label={`附加 ${name}`} />}</ValueCell>
                  </tr>
                ))}
                {['计算属性', '显示样式'].map((name) => (
                  <tr key={name}>
                    <NameCell scope="row" $group $height={19}>
                      <GroupLabel>
                        <PlusButton type="button" aria-label={`展开${name}`}>
                          <Svg width="7" height="7" viewBox="0 0 7 7"><path d="M3.500 0v7M0 3.500h7" stroke="#000" /></Svg>
                        </PlusButton>
                        {name}
                      </GroupLabel>
                    </NameCell>
                    <ValueCell $height={19} />
                    <ValueCell $height={19} />
                  </tr>
                ))}
              </tbody>
            </Grid>
          </Well>
        </Panels>

        <Workspace>
          <Toolbar $height={30}>
            <Segment>
              <Handle />
              <ComboStrip>
                <Combo value="首层" width={58} label="楼层" />
                <Combo value="板" width={70} label="构件大类" />
                <Combo value="螺旋板" width={70} label="构件类型" />
                <Combo value="LXB-1" width={70} label="构件" />
                <Combo value="分层1" width={72} label="分层" />
              </ComboStrip>
              <Divider />
              <Tool icon="props" label="属性" on />
              <Tool icon="list" label="构件列表" on />
              <Tool icon="pick" label="拾取构件" />
            </Segment>
            <Segment>
              <Handle />
              <Tool icon="twoPoint" label="两点" />
              <Tool icon="parallel" label="平行" />
              <Tool icon="lengthDim" label="长度标注" />
              <Tool icon="alignDim" label="对齐标注" />
            </Segment>
          </Toolbar>
          <Toolbar $height={27}>
            <Segment>
              <Handle />
              <Tool icon="cursor" label="选择" on />
              <CaretButton type="button" aria-label="选择方式"><Caret /></CaretButton>
              <Divider />
              <Tool icon="point" label="点" />
              <Tool icon="rotatePoint" label="旋转点" />
            </Segment>
          </Toolbar>
          <Stage>
            <EditBar>
              <EditHandle />
              {edits.map((item, i) =>
                item ? (
                  <EditButton key={i} type="button" $labelled={!!item[1]} aria-label={item[1] ?? item[0]}>
                    <Icon name={item[0]} />
                    {item[1] && <VerticalText>{item[1]}</VerticalText>}
                    {item[2] && <SideCaret />}
                  </EditButton>
                ) : (
                  <EditDivider key={i} />
                ),
              )}
            </EditBar>
            <Viewport><Drawing /></Viewport>
          </Stage>
        </Workspace>
      </Body>

      <Markup aria-hidden="true">
        <g fill="none" stroke="#e84040">
          <ellipse cx="85" cy="320" rx="36" ry="14" />
          <ellipse cx="1052" cy="368" rx="43" ry="45" />
        </g>
        <path d="M119 323L998 369V366L1009 371 998 376V373L529 347 119 324z" fill="#ff3a3a" stroke="#ff3a3a" strokeWidth=".5" />
      </Markup>
    </Shell>
  );
}
